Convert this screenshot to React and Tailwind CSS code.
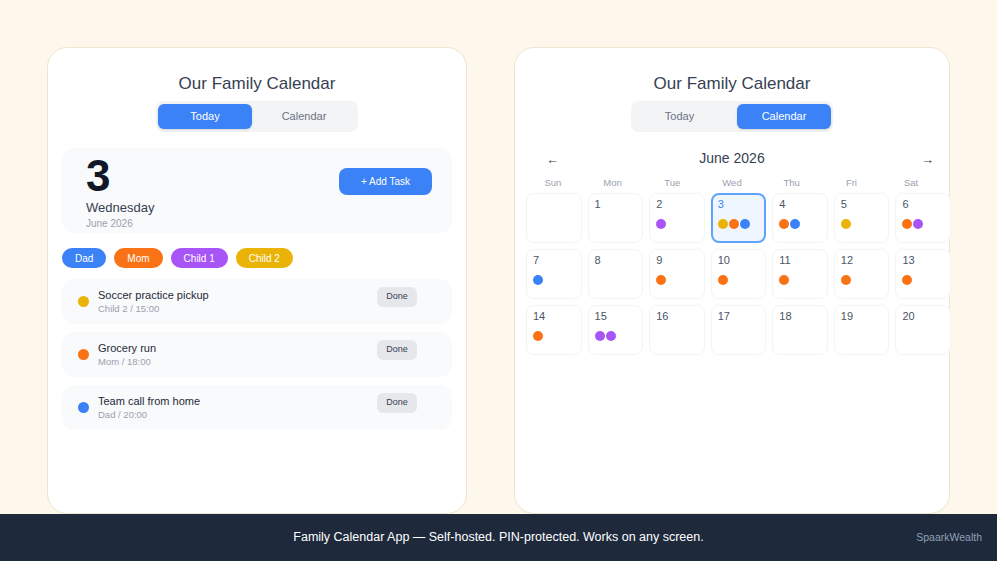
import React, { useState } from 'react';

const COLORS = {
  Dad: 'bg-[#3b82f6]',
  Mom: 'bg-[#f97316]',
  'Child 1': 'bg-[#a855f7]',
  'Child 2': 'bg-[#eab308]',
};

const tasks = [
  { title: 'Soccer practice pickup', who: 'Child 2', time: '15:00' },
  { title: 'Grocery run', who: 'Mom', time: '18:00' },
  { title: 'Team call from home', who: 'Dad', time: '20:00' },
];

// events per day of June 2026
const events = {
  2: ['Child 1'],
  3: ['Child 2', 'Mom', 'Dad'],
  4: ['Mom', 'Dad'],
  5: ['Child 2'],
  6: ['Mom', 'Child 1'],
  7: ['Dad'],
  9: ['Mom'],
  10: ['Mom'],
  11: ['Mom'],
  12: ['Mom'],
  13: ['Mom'],
  14: ['Mom'],
  15: ['Child 1', 'Child 1'],
};

const weekdays = ['Sun', 'Mon', 'Tue', 'Wed', 'Thu', 'Fri', 'Sat'];

function Tabs({ active }) {
  const today = active === 'Today';
  return (
    <div className="mx-auto mt-1 flex h-[31px] w-[202px] items-center justify-between rounded-lg bg-gray-100 px-[2px] text-[11px]">
      <button
        className={
          'h-[25px] rounded-md ' +
          (today ? 'w-[94px] bg-[#3b82f6] text-white shadow-sm' : 'w-[93px] text-gray-500')
        }
      >
        Today
      </button>
      <button
        className={
          'h-[25px] rounded-md ' +
          (!today ? 'w-[94px] bg-[#3b82f6] text-white shadow-sm' : 'flex-1 text-gray-500')
        }
      >
        Calendar
      </button>
    </div>
  );
}

function Card({ width, children }) {
  return (
    <div className={'h-[467px] rounded-[20px] border border-[#eee4cf] bg-white pt-[23px] ' + width}>
      <h1 className="text-center text-[17px] leading-[26px] text-gray-700">Our Family Calendar</h1>
      {children}
    </div>
  );
}

function TodayView() {
  return (
    <Card width="w-[420px] px-[14px]">
      <Tabs active="Today" />

      <div className="mt-4 flex h-[85px] justify-between rounded-xl bg-gray-50 pl-6 pr-5 pt-[6px]">
        <div>
          <div className="text-[44px] font-bold leading-[44px] text-gray-900">3</div>
          <div className="mt-[2px] text-[13px] leading-[16px] text-gray-700">Wednesday</div>
          <div className="mt-px text-[10px] leading-[14px] text-gray-400">June 2026</div>
        </div>
        <button className="mt-[14px] h-[27px] w-[93px] rounded-lg bg-[#3b82f6] text-[10px] text-white">
          + Add Task
        </button>
      </div>

      <div className="mt-[15px] flex gap-2">
        {Object.keys(COLORS).map((name) => (
          <span
            key={name}
            className={'flex h-5 items-center rounded-full px-[13px] text-[10px] text-white ' + COLORS[name]}
          >
            {name}
          </span>
        ))}
      </div>

      <div className="mt-[11px] flex flex-col gap-2">
        {tasks.map((t) => (
          <div key={t.title} className="flex h-[45px] items-start rounded-xl bg-gray-50 pl-4 pr-[35px] pt-2">
            <span className={'mt-[9px] h-[11px] w-[11px] rounded-full ' + COLORS[t.who]} />
            <div className="ml-[9px] flex-1">
              <div className="text-[11px] leading-[16px] text-gray-800">{t.title}</div>
              <div className="text-[9.5px] leading-[12px] text-gray-400">
                {t.who} / {t.time}
              </div>
            </div>
            <button className="h-5 w-10 rounded-md bg-gray-200 text-[9px] text-gray-700">Done</button>
          </div>
        ))}
      </div>
    </Card>
  );
}

function CalendarView() {
  const [selected] = useState(3);
  const cells = [null];
  for (let d = 1; d <= 20; d++) cells.push(d);

  return (
    <Card width="w-[436px] px-[11px]">
      <Tabs active="Calendar" />

      <div className="mt-[15px] grid grid-cols-[1fr_auto_1fr] items-center">
        <button className="justify-self-start pl-5 pt-[3px] text-[13px] text-gray-700">←</button>
        <div className="text-[14px] leading-[18px] text-gray-700">June 2026</div>
        <button className="justify-self-end pr-1 pt-[3px] text-[13px] text-gray-700">→</button>
      </div>

      <div className="mt-[6px] grid grid-cols-7 gap-[6px]">
        {weekdays.map((w) => (
          <div key={w} className="text-center text-[9.5px] leading-[14px] text-gray-400">
            {w}
          </div>
        ))}
      </div>

      <div className="mt-[3px] grid w-[425px] grid-cols-7 gap-[6px]">
        {cells.map((d, i) => {
          const today = d === selected;
          return (
            <div
              key={i}
              className={
                'h-[50px] rounded-lg ' +
                (today
                  ? 'border-2 border-[#60a5fa] bg-[#eff6ff] px-1 pt-[3px]'
                  : 'border border-gray-100 bg-white px-[5px] pt-1')
              }
            >
              {d && (
                <>
                  <div className={'pl-px text-[11px] leading-[13px] ' + (today ? 'text-[#3b82f6]' : 'text-gray-600')}>
                    {d}
                  </div>
                  <div className="mt-2 flex gap-px pl-[1px]">
                    {(events[d] || []).map((who, j) => (
                      <span key={j} className={'h-2.5 w-2.5 rounded-full ' + COLORS[who]} />
                    ))}
                  </div>
                </>
              )}
            </div>
          );
        })}
      </div>
    </Card>
  );
}

export default function App() {
  return (
    <div className="h-[569px] w-[1005px] bg-white" style={{ fontFamily: '"Liberation Sans", Arial, sans-serif' }}>
      <div className="flex h-[561px] w-[997px] flex-col bg-[#fef7ec]">
        <div className="flex gap-[47px] px-[47px] pt-[47px]">
          <TodayView />
          <CalendarView />
        </div>
        <footer className="relative flex flex-1 items-center justify-center bg-[#1e293b]">
          <span className="text-[12.5px] text-white">
            Family Calendar App — Self-hosted. PIN-protected. Works on any screen.
          </span>
          <span className="absolute right-[15px] text-[10.5px] text-slate-400">SpaarkWealth</span>
        </footer>
      </div>
    </div>
  );
}
